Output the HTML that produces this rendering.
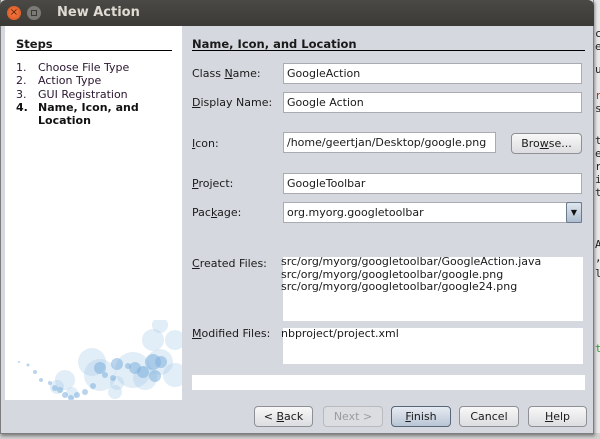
<!DOCTYPE html>
<html><head><meta charset="utf-8"><style>
*{margin:0;padding:0;box-sizing:border-box}
body{width:600px;height:439px;overflow:hidden;background:#c9c9c9;font-family:"DejaVu Sans","Liberation Sans",sans-serif;font-size:11px;color:#1a1a1a;position:relative}
.abs{position:absolute}
.dlg{left:0;top:0;width:594px;height:434px;background:#d6d8df;border:1px solid #7d7d7d;border-top:none;box-shadow:1px 2px 3px rgba(0,0,0,.4)}
.title{left:0;top:0;width:594px;height:26px;background:linear-gradient(#4a4945,#3b3a36);border-radius:6px 6px 0 0}
.title span{position:absolute;left:57px;top:5px;color:#dfdbd2;font-weight:bold;font-size:13px;font-family:"DejaVu Sans",sans-serif}
.inp{background:#fff;border:1px solid #a9abb0;padding:3px 0 0 3px;height:21px;white-space:nowrap;overflow:hidden}
.lbl{left:192px}
.btn{height:21px;border:1px solid #8e9096;border-radius:4px;background:linear-gradient(#f8f8f8,#dcdde0);text-align:center;line-height:19px}
u{text-decoration:underline}
.code{font-family:"DejaVu Sans Mono",monospace;font-size:11px;left:595px;color:#222}
</style></head><body>
<div class="abs" style="left:594px;top:0;width:6px;height:439px;background:#e8e8e8"></div>
<div class="abs" style="left:0;top:433px;width:600px;height:6px;background:#d0d0d0"></div>
<div class="abs code" style="top:426px;left:40px;font-size:10px">203</div>
<div class="abs code" style="top:27px">c</div><div class="abs code" style="top:40px">e</div>
<div class="abs code" style="top:63px">u</div><div class="abs code" style="top:89px;color:#a33">r</div>
<div class="abs code" style="top:102px">s</div><div class="abs code" style="top:134px">t</div>
<div class="abs code" style="top:147px">e</div><div class="abs code" style="top:160px">r</div>
<div class="abs code" style="top:173px">i</div><div class="abs code" style="top:186px">t</div>
<div class="abs code" style="top:238px">A</div><div class="abs code" style="top:251px">,</div>
<div class="abs code" style="top:267px">l</div><div class="abs code" style="top:342px;color:#393">t</div>

<div class="abs dlg"></div>
<div class="abs title"><span>New Action</span></div>
<div class="abs" style="left:7px;top:6px;width:14px;height:14px;border-radius:50%;background:radial-gradient(#f47a43,#d9531e);color:#5a2000;font-size:10px;line-height:14px;text-align:center">×</div>
<div class="abs" style="left:27px;top:6px;width:14px;height:14px;border-radius:50%;background:#7b7a75"><div class="abs" style="left:4px;top:4px;width:6px;height:6px;border:1px solid #3b3a36"></div></div>

<div class="abs" style="left:5px;top:26px;width:177px;height:374px;background:#fff"></div>
<svg class="abs" style="left:5px;top:320px" width="177" height="80">
<g fill="#a9cbe8" fill-opacity=".35">
<circle cx="87" cy="42" r="14"/><circle cx="128" cy="50" r="18"/><circle cx="155" cy="42" r="13"/><circle cx="148" cy="20" r="11"/><circle cx="155" cy="5" r="8"/><circle cx="170" cy="20" r="10"/><circle cx="95" cy="55" r="16"/><circle cx="60" cy="60" r="10"/><circle cx="110" cy="72" r="7"/><circle cx="112" cy="63" r="7"/><circle cx="67" cy="73" r="6"/><circle cx="52" cy="67" r="7"/><circle cx="170" cy="55" r="12"/><circle cx="140" cy="58" r="12"/>
</g>
<g fill="#7fb1dd" fill-opacity=".55">
<circle cx="95" cy="48" r="6"/><circle cx="112" cy="44" r="6"/><circle cx="130" cy="48" r="6"/><circle cx="148" cy="42" r="8"/><circle cx="138" cy="52" r="6"/><circle cx="156" cy="42" r="6"/><circle cx="150" cy="56" r="6"/><circle cx="123" cy="46" r="3"/><circle cx="100" cy="55" r="3"/><circle cx="108" cy="58" r="3"/><circle cx="88" cy="66" r="3"/><circle cx="80" cy="72" r="3"/><circle cx="72" cy="75" r="3"/><circle cx="60" cy="75" r="3"/><circle cx="50" cy="68" r="3"/><circle cx="45" cy="63" r="2"/><circle cx="36" cy="60" r="2"/><circle cx="30" cy="52" r="2"/><circle cx="23" cy="45" r="1.5"/><circle cx="14" cy="42" r="1"/><circle cx="55" cy="70" r="3"/><circle cx="66" cy="78" r="3"/>
</g></svg>

<div class="abs" style="left:16px;top:37px;font-weight:bold;font-size:11.5px">Steps</div>
<div class="abs" style="left:16px;top:50px;width:156px;height:1px;background:#000"></div>
<div class="abs" style="left:16px;top:61px;line-height:13.3px;color:#2a1530">1.<br>2.<br>3.</div>
<div class="abs" style="left:38px;top:61px;line-height:13.3px;color:#2a1530">Choose File Type<br>Action Type<br>GUI Registration</div>
<div class="abs" style="left:16px;top:101px;line-height:13.3px;font-weight:bold;color:#111">4.</div>
<div class="abs" style="left:38px;top:101px;line-height:13.3px;font-weight:bold;color:#111">Name, Icon, and<br>Location</div>

<div class="abs" style="left:192px;top:37px;font-weight:bold;font-size:11.5px">Name, Icon, and Location</div>
<div class="abs" style="left:192px;top:50px;width:393px;height:1px;background:#000"></div>

<div class="abs lbl" style="top:67px">Class <u>N</u>ame:</div>
<div class="abs inp" style="left:283px;top:63px;width:299px">GoogleAction</div>
<div class="abs lbl" style="top:96px"><u>D</u>isplay Name:</div>
<div class="abs inp" style="left:283px;top:92px;width:299px">Google Action</div>
<div class="abs lbl" style="top:137px"><u>I</u>con:</div>
<div class="abs inp" style="left:283px;top:132px;width:213px">/home/geertjan/Desktop/google.png</div>
<div class="abs btn" style="left:511px;top:133px;width:71px">Bro<u>w</u>se...</div>
<div class="abs lbl" style="top:177px"><u>P</u>roject:</div>
<div class="abs inp" style="left:283px;top:173px;width:299px">GoogleToolbar</div>
<div class="abs lbl" style="top:206px">Pac<u>k</u>age:</div>
<div class="abs inp" style="left:283px;top:202px;width:299px">org.myorg.googletoolbar</div>
<div class="abs" style="left:566px;top:202px;width:16px;height:21px;border:1px solid #6b7a8f;border-radius:2px;background:linear-gradient(#dfe6ef,#aebdd0);font-size:8px;text-align:center;line-height:19px;color:#111">▼</div>

<div class="abs lbl" style="top:257px"><u>C</u>reated Files:</div>
<div class="abs" style="left:283px;top:257px;width:300px;height:64px;background:#fff"></div>
<div class="abs" style="left:281px;top:256px;line-height:12.5px">src/org/myorg/googletoolbar/GoogleAction.java<br>src/org/myorg/googletoolbar/google.png<br>src/org/myorg/googletoolbar/google24.png</div>
<div class="abs lbl" style="top:327px"><u>M</u>odified Files:</div>
<div class="abs" style="left:283px;top:328px;width:300px;height:36px;background:#fff"></div>
<div class="abs" style="left:281px;top:327px">nbproject/project.xml</div>
<div class="abs" style="left:192px;top:375px;width:393px;height:15px;background:#fff"></div>

<div class="abs btn" style="left:254px;top:406px;width:59px">&lt; <u>B</u>ack</div>
<div class="abs btn" style="left:323px;top:406px;width:60px;color:#9a9ca2;border-color:#b8babf;background:#dcdde1">Next &gt;</div>
<div class="abs btn" style="left:391px;top:406px;width:60px;border-color:#58667a;background:linear-gradient(#e6ebf2,#b9c5d5)"><u>F</u>inish</div>
<div class="abs btn" style="left:459px;top:406px;width:60px">Cancel</div>
<div class="abs btn" style="left:528px;top:406px;width:59px"><u>H</u>elp</div>
</body></html>
